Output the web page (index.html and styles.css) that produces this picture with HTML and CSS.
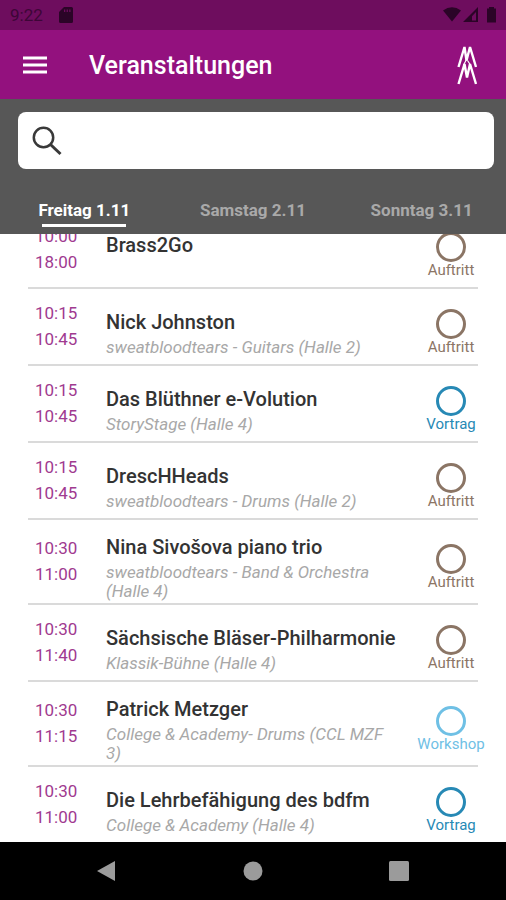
FILE: index.html
```html
<!DOCTYPE html>
<html lang="de">
<head>
<meta charset="utf-8">
<meta name="viewport" content="width=device-width, initial-scale=1">
<title>Veranstaltungen</title>
<link rel="stylesheet" href="styles.css">
</head>
<body>
<div class="status">
  <span class="clock">9:22</span>
  <svg class="sd" width="14" height="16" viewBox="0 0 14 16"><path fill-rule="evenodd" d="M5 0h7.500a1.500 1.500 0 0 1 1.500 1.500v13a1.500 1.500 0 0 1-1.500 1.500h-11A1.500 1.500 0 0 1 0 14.500V5zM5 2.500v2.500h1.300V2.500zm2.600 0v2.500h1.300V2.500zm2.600 0v2.500h1.300V2.500z"/></svg>
  <svg class="signals" width="54" height="16" viewBox="0 0 54 16">
    <path d="M0 3.500Q9 -3 18 3.500L9 14.500z"/>
    <path fill-rule="evenodd" d="M35 0v15H20zM33 5l-4 4.200V13.500h4z"/>
    <path d="M46 1.500V0h5v1.500h2V15.500h-9V1.500z"/>
  </svg>
</div>
<header class="appbar">
  <button class="menu" aria-label="Menü"><svg width="24" height="18" viewBox="0 0 24 18"><path d="M0 2h24M0 9h24M0 16h24" stroke="#fff" stroke-width="3"/></svg></button>
  <h1>Veranstaltungen</h1>
  <svg class="logo" width="20" height="40" viewBox="0 0 20 40"><g fill="none" stroke="#fff" stroke-width="2.400" stroke-linejoin="bevel"><path d="M1.500 22L7.500 2L9.500 15.500L13 2L19 22"/><path d="M1.500 39L7.500 19L10 32.500L13 19L19 39"/><path d="M6.500 20L9.500 14.500M13.500 20L10.500 15.500" stroke-width="1.200"/></g></svg>
</header>
<div class="filter">
  <label class="search">
    <svg width="30" height="30" viewBox="0 0 30 30"><g fill="none" stroke="#393939"><circle cx="11.500" cy="11.500" r="9.700" stroke-width="2.500"/><path d="M18.500 18.500L28.500 28" stroke-width="3"/></g></svg>
    <input type="search" aria-label="Suche">
  </label>
  <nav class="tabs">
    <a class="tab active" href="#fr">Freitag 1.11</a>
    <a class="tab" href="#sa">Samstag 2.11</a>
    <a class="tab" href="#so">Sonntag 3.11</a>
  </nav>
</div>
<main>
  <ul class="events">
    <li class="event"><div class="times"><time>10:00</time><time>18:00</time></div><div class="info"><h2>Brass2Go</h2><p></p></div><div class="kind auftritt"><i class="ring"></i><span>Auftritt</span></div></li>
    <li class="event"><div class="times"><time>10:15</time><time>10:45</time></div><div class="info"><h2>Nick Johnston</h2><p>sweatbloodtears - Guitars (Halle 2)</p></div><div class="kind auftritt"><i class="ring"></i><span>Auftritt</span></div></li>
    <li class="event"><div class="times"><time>10:15</time><time>10:45</time></div><div class="info"><h2>Das Blüthner e-Volution</h2><p>StoryStage (Halle 4)</p></div><div class="kind vortrag"><i class="ring"></i><span>Vortrag</span></div></li>
    <li class="event"><div class="times"><time>10:15</time><time>10:45</time></div><div class="info"><h2>DrescHHeads</h2><p>sweatbloodtears - Drums (Halle 2)</p></div><div class="kind auftritt"><i class="ring"></i><span>Auftritt</span></div></li>
    <li class="event"><div class="times"><time>10:30</time><time>11:00</time></div><div class="info"><h2>Nina Sivošova piano trio</h2><p>sweatbloodtears - Band &amp; Orchestra (Halle 4)</p></div><div class="kind auftritt"><i class="ring"></i><span>Auftritt</span></div></li>
    <li class="event"><div class="times"><time>10:30</time><time>11:40</time></div><div class="info"><h2>Sächsische Bläser-Philharmonie</h2><p>Klassik-Bühne (Halle 4)</p></div><div class="kind auftritt"><i class="ring"></i><span>Auftritt</span></div></li>
    <li class="event"><div class="times"><time>10:30</time><time>11:15</time></div><div class="info"><h2>Patrick Metzger</h2><p>College &amp; Academy- Drums (CCL MZF 3)</p></div><div class="kind workshop"><i class="ring"></i><span>Workshop</span></div></li>
    <li class="event"><div class="times"><time>10:30</time><time>11:00</time></div><div class="info"><h2>Die Lehrbefähigung des bdfm</h2><p>College &amp; Academy (Halle 4)</p></div><div class="kind vortrag"><i class="ring"></i><span>Vortrag</span></div></li>
  </ul>
</main>
<footer class="sysnav">
  <button aria-label="Zurück"><svg width="20" height="22" viewBox="0 0 20 22"><path d="M18 1v20L0 11z"/></svg></button>
  <button aria-label="Start"><svg width="20" height="20" viewBox="0 0 20 20"><circle cx="10" cy="10" r="9.500"/></svg></button>
  <button aria-label="Übersicht"><svg width="20" height="20" viewBox="0 0 20 20"><rect width="20" height="20" rx="1.500"/></svg></button>
</footer>
</body>
</html>
```

FILE: styles.css
```css
* { box-sizing: border-box; }
body {
  margin: 0;
  height: 100vh;
  display: flex;
  flex-direction: column;
  background: #fff;
  font-family: Roboto, "Liberation Sans", sans-serif;
}
button { border: 0; padding: 0; background: none; }
svg { display: block; }
h1, h2, p, ul { margin: 0; padding: 0; }

.status {
  flex: none;
  display: flex;
  align-items: center;
  height: 30px;
  padding: 0 9px 0 10px;
  background: #6e0d5e;
  color: #3d0637;
}
.status svg { fill: #2b0427; }
.clock { font-size: 17px; }
.sd { margin-left: 16px; }
.signals { margin-left: auto; }

.appbar {
  flex: none;
  display: flex;
  align-items: center;
  height: 69px;
  padding: 0 29px 0 23px;
  background: #93117e;
  color: #fff;
}
.appbar h1 {
  flex: 1;
  margin-left: 42px;
  padding-top: 2px;
  font-size: 25px;
  line-height: 32px;
  font-weight: 500;
}

.filter {
  flex: none;
  padding: 13px 0 7px;
  background: #575757;
}
.search {
  display: flex;
  align-items: center;
  gap: 10px;
  height: 57px;
  margin: 0 12px 0 18px;
  padding: 0 14px;
  border-radius: 8px;
  background: #fff;
}
.search input {
  flex: 1;
  min-width: 0;
  border: 0;
  outline: 0;
  background: none;
  font: 20px Roboto, sans-serif;
}
.tabs {
  display: grid;
  grid-template-columns: repeat(3, 1fr);
  margin-top: 27px;
}
.tab {
  display: flex;
  flex-direction: column;
  align-items: center;
  font-size: 17px;
  line-height: 28px;
  font-weight: 700;
  color: #a9a9a9;
  text-decoration: none;
}
.tab::after { content: ""; width: 50%; height: 3px; }
.tab.active { color: #fff; }
.tab.active::after { background: #fff; }

main {
  flex: 1;
  min-height: 0;
  overflow: hidden;
}
.events {
  margin: -22px 28px 0;
  list-style: none;
}
.event {
  display: grid;
  grid-template-columns: 78px 1fr 54px;
  align-items: center;
  min-height: 77px;
  padding: 13px 0 2px;
  border-bottom: 2px solid #dadada;
}
.event:last-child { border-bottom-color: transparent; }
.times {
  display: flex;
  flex-direction: column;
  margin: -2px 0 10px;
  padding-left: 7px;
  font-size: 17px;
  line-height: 26px;
  color: #a03a90;
}
.info { padding-right: 26px; }
.info h2 {
  margin-bottom: 2px;
  font-size: 20px;
  line-height: 28px;
  font-weight: 500;
  color: #333;
}
.info p {
  min-height: 19px;
  font-size: 17px;
  line-height: 19px;
  font-style: italic;
  color: #a8a8a8;
}
.kind {
  display: flex;
  flex-direction: column;
  align-items: center;
  font-size: 15px;
  line-height: 16px;
}
.ring {
  width: 30px;
  height: 30px;
  border: 3px solid;
  border-radius: 50%;
}
.auftritt { color: #8b7565; }
.vortrag { color: #2789b5; }
.workshop { color: #6fc0e5; }

.sysnav {
  flex: none;
  display: flex;
  justify-content: space-between;
  align-items: center;
  height: 58px;
  padding: 0 97px;
  background: #000;
}
.sysnav svg { fill: #9b9b9b; }
```
